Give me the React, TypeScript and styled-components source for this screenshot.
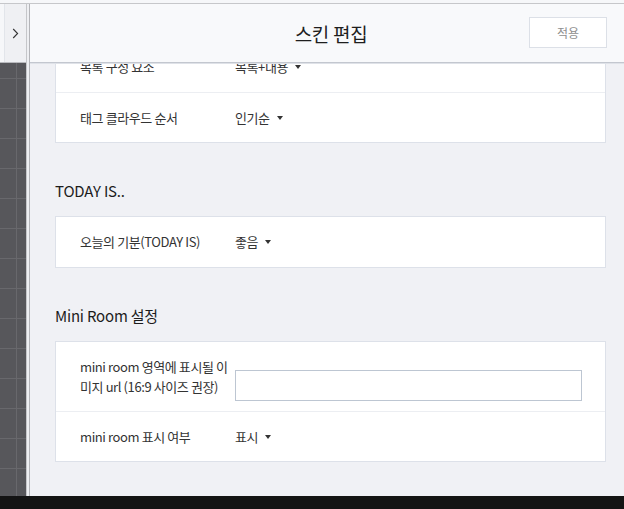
import React from "react";
import styled, { createGlobalStyle } from "styled-components";

const GlobalStyle = createGlobalStyle`
  html, body { margin: 0; padding: 0; background: #141414; }
  body { font-family: "Noto Sans CJK KR", "Noto Sans", sans-serif; color: #333; }
  * { box-sizing: border-box; }
`;

const Screen = styled.div`
  width: 624px;
  height: 509px;
  display: flex;
  flex-direction: column;
  overflow: hidden;
`;

const Main = styled.div`
  height: 496px;
  padding-top: 3px;
  background: #f6f7f9;
  display: flex;
  flex-direction: column;
`;

const Frame = styled.div`
  flex: 1;
  min-height: 0;
  display: flex;
  border-top: 1px solid #c6c7ca;
`;

const Footer = styled.div`
  flex: 1;
  background: #141414;
`;

const Sidebar = styled.aside`
  width: 27px;
  display: flex;
  flex-direction: column;
  border-right: 1px solid #c5c6c9;
`;

const SideTop = styled.div`
  height: 59px;
  display: flex;
  background: #f6f7f9;
  padding-left: 4px;
  border-bottom: 1px solid #b9babe;
`;

const ToggleButton = styled.button`
  flex: 1;
  border: none;
  border-left: 1px solid #e2e5ea;
  background: #eff0f3;
  padding: 0;
  display: flex;
  align-items: center;
  justify-content: center;
  cursor: pointer;
`;

const SideCanvas = styled.div`
  flex: 1;
  background-color: #57575b;
  background-image:
    linear-gradient(to bottom, transparent 15px, #68686c 15px, #68686c 16px, transparent 16px),
    linear-gradient(to right, transparent 16px, #68686c 16px, #68686c 17px, transparent 17px);
  background-size: 100% 30px, 100% 100%;
`;

const Splitter = styled.div`
  width: 3px;
  background: #eeeff2;
  border-right: 1px solid #b3b4b8;
`;

const Panel = styled.section`
  flex: 1;
  min-width: 0;
  display: flex;
  flex-direction: column;
  background: #f0f1f5;
`;

const Header = styled.header`
  height: 59px;
  flex-shrink: 0;
  display: grid;
  grid-template-columns: 1fr auto 1fr;
  align-items: center;
  padding: 0 17px 0 25px;
  background: #f8f9fb;
  border-bottom: 1px solid #c3c7cf;
  box-shadow: 0 1px 0 #dfe2e8;
  position: relative;
  z-index: 1;
`;

const Title = styled.h1`
  grid-column: 2;
  margin: 0;
  font-size: 19px;
  font-weight: 400;
  color: #1e1e1e;
  letter-spacing: -0.3px;
`;

const ApplyButton = styled.button`
  grid-column: 3;
  justify-self: end;
  width: 78px;
  height: 31px;
  background: #fff;
  border: 1px solid #dce0e7;
  color: #8e8e8e;
  font-family: inherit;
  font-size: 12px;
  padding: 0;
  margin-top: -1px;
`;

const Content = styled.div`
  flex: 1;
  min-height: 0;
  overflow: hidden;
  padding: 0 18px 0 25px;
`;

const Scroller = styled.div`
  margin-top: -22px;
`;

const SectionTitle = styled.h2`
  margin: 38px 0 15px;
  font-size: 15px;
  line-height: 20px;
  font-weight: 400;
  color: #1c1c1c;
  letter-spacing: -0.2px;
`;

const Card = styled.div`
  background: #fff;
  border: 1px solid #dde1e9;
`;

const Row = styled.div`
  display: flex;
  align-items: center;
  min-height: 50px;
  padding: 0 24px;
  & + & {
    border-top: 1px solid #eceef2;
  }
`;

const TallRow = styled(Row)`
  padding-top: 10px;
  padding-bottom: 10px;
`;

const Label = styled.div`
  width: 155px;
  flex-shrink: 0;
  font-size: 13px;
  line-height: 20px;
  color: #333;
  letter-spacing: -0.4px;
`;

const Value = styled.div`
  flex: 1;
  display: flex;
  align-items: center;
  font-size: 13px;
  line-height: 20px;
  color: #333;
  letter-spacing: -0.4px;
`;

const Select = styled.span`
  display: inline-flex;
  align-items: center;
  gap: 7px;
  cursor: pointer;
`;

const Caret = styled.span`
  width: 0;
  height: 0;
  border-left: 3.5px solid transparent;
  border-right: 3.5px solid transparent;
  border-top: 4px solid #333;
`;

const UrlInput = styled.input`
  width: 347px;
  height: 31px;
  margin-top: 18px;
  border: 1px solid #bdc6d2;
  background: #fff;
  outline: none;
  font-family: inherit;
  font-size: 13px;
  padding: 0 8px;
`;

const Chevron = () => (
  <svg width="7" height="11" viewBox="0 0 7 11" fill="none">
    <path d="M1.2 1 L5.6 5.5 L1.2 10" stroke="#333" strokeWidth="1.1" />
  </svg>
);

const Dropdown = ({ children }: { children: React.ReactNode }) => (
  <Select>
    {children}
    <Caret />
  </Select>
);

export default function App() {
  return (
    <>
      <GlobalStyle />
      <Screen>
        <Main>
          <Frame>
            <Sidebar>
              <SideTop>
                <ToggleButton aria-label="펼치기">
                  <Chevron />
                </ToggleButton>
              </SideTop>
              <SideCanvas />
            </Sidebar>
            <Splitter />
            <Panel>
              <Header>
                <Title>스킨 편집</Title>
                <ApplyButton>적용</ApplyButton>
              </Header>
              <Content>
                <Scroller>
                  <Card>
                    <Row>
                      <Label>목록 구성 요소</Label>
                      <Value>
                        <Dropdown>목록+내용</Dropdown>
                      </Value>
                    </Row>
                    <Row>
                      <Label>태그 클라우드 순서</Label>
                      <Value>
                        <Dropdown>인기순</Dropdown>
                      </Value>
                    </Row>
                  </Card>

                  <SectionTitle>TODAY IS..</SectionTitle>
                  <Card>
                    <Row>
                      <Label>오늘의 기분(TODAY IS)</Label>
                      <Value>
                        <Dropdown>좋음</Dropdown>
                      </Value>
                    </Row>
                  </Card>

                  <SectionTitle>Mini Room 설정</SectionTitle>
                  <Card>
                    <TallRow>
                      <Label>mini room 영역에 표시될 이미지 url (16:9 사이즈 권장)</Label>
                      <Value>
                        <UrlInput type="text" />
                      </Value>
                    </TallRow>
                    <Row>
                      <Label>mini room 표시 여부</Label>
                      <Value>
                        <Dropdown>표시</Dropdown>
                      </Value>
                    </Row>
                  </Card>
                </Scroller>
              </Content>
            </Panel>
          </Frame>
        </Main>
        <Footer />
      </Screen>
    </>
  );
}
